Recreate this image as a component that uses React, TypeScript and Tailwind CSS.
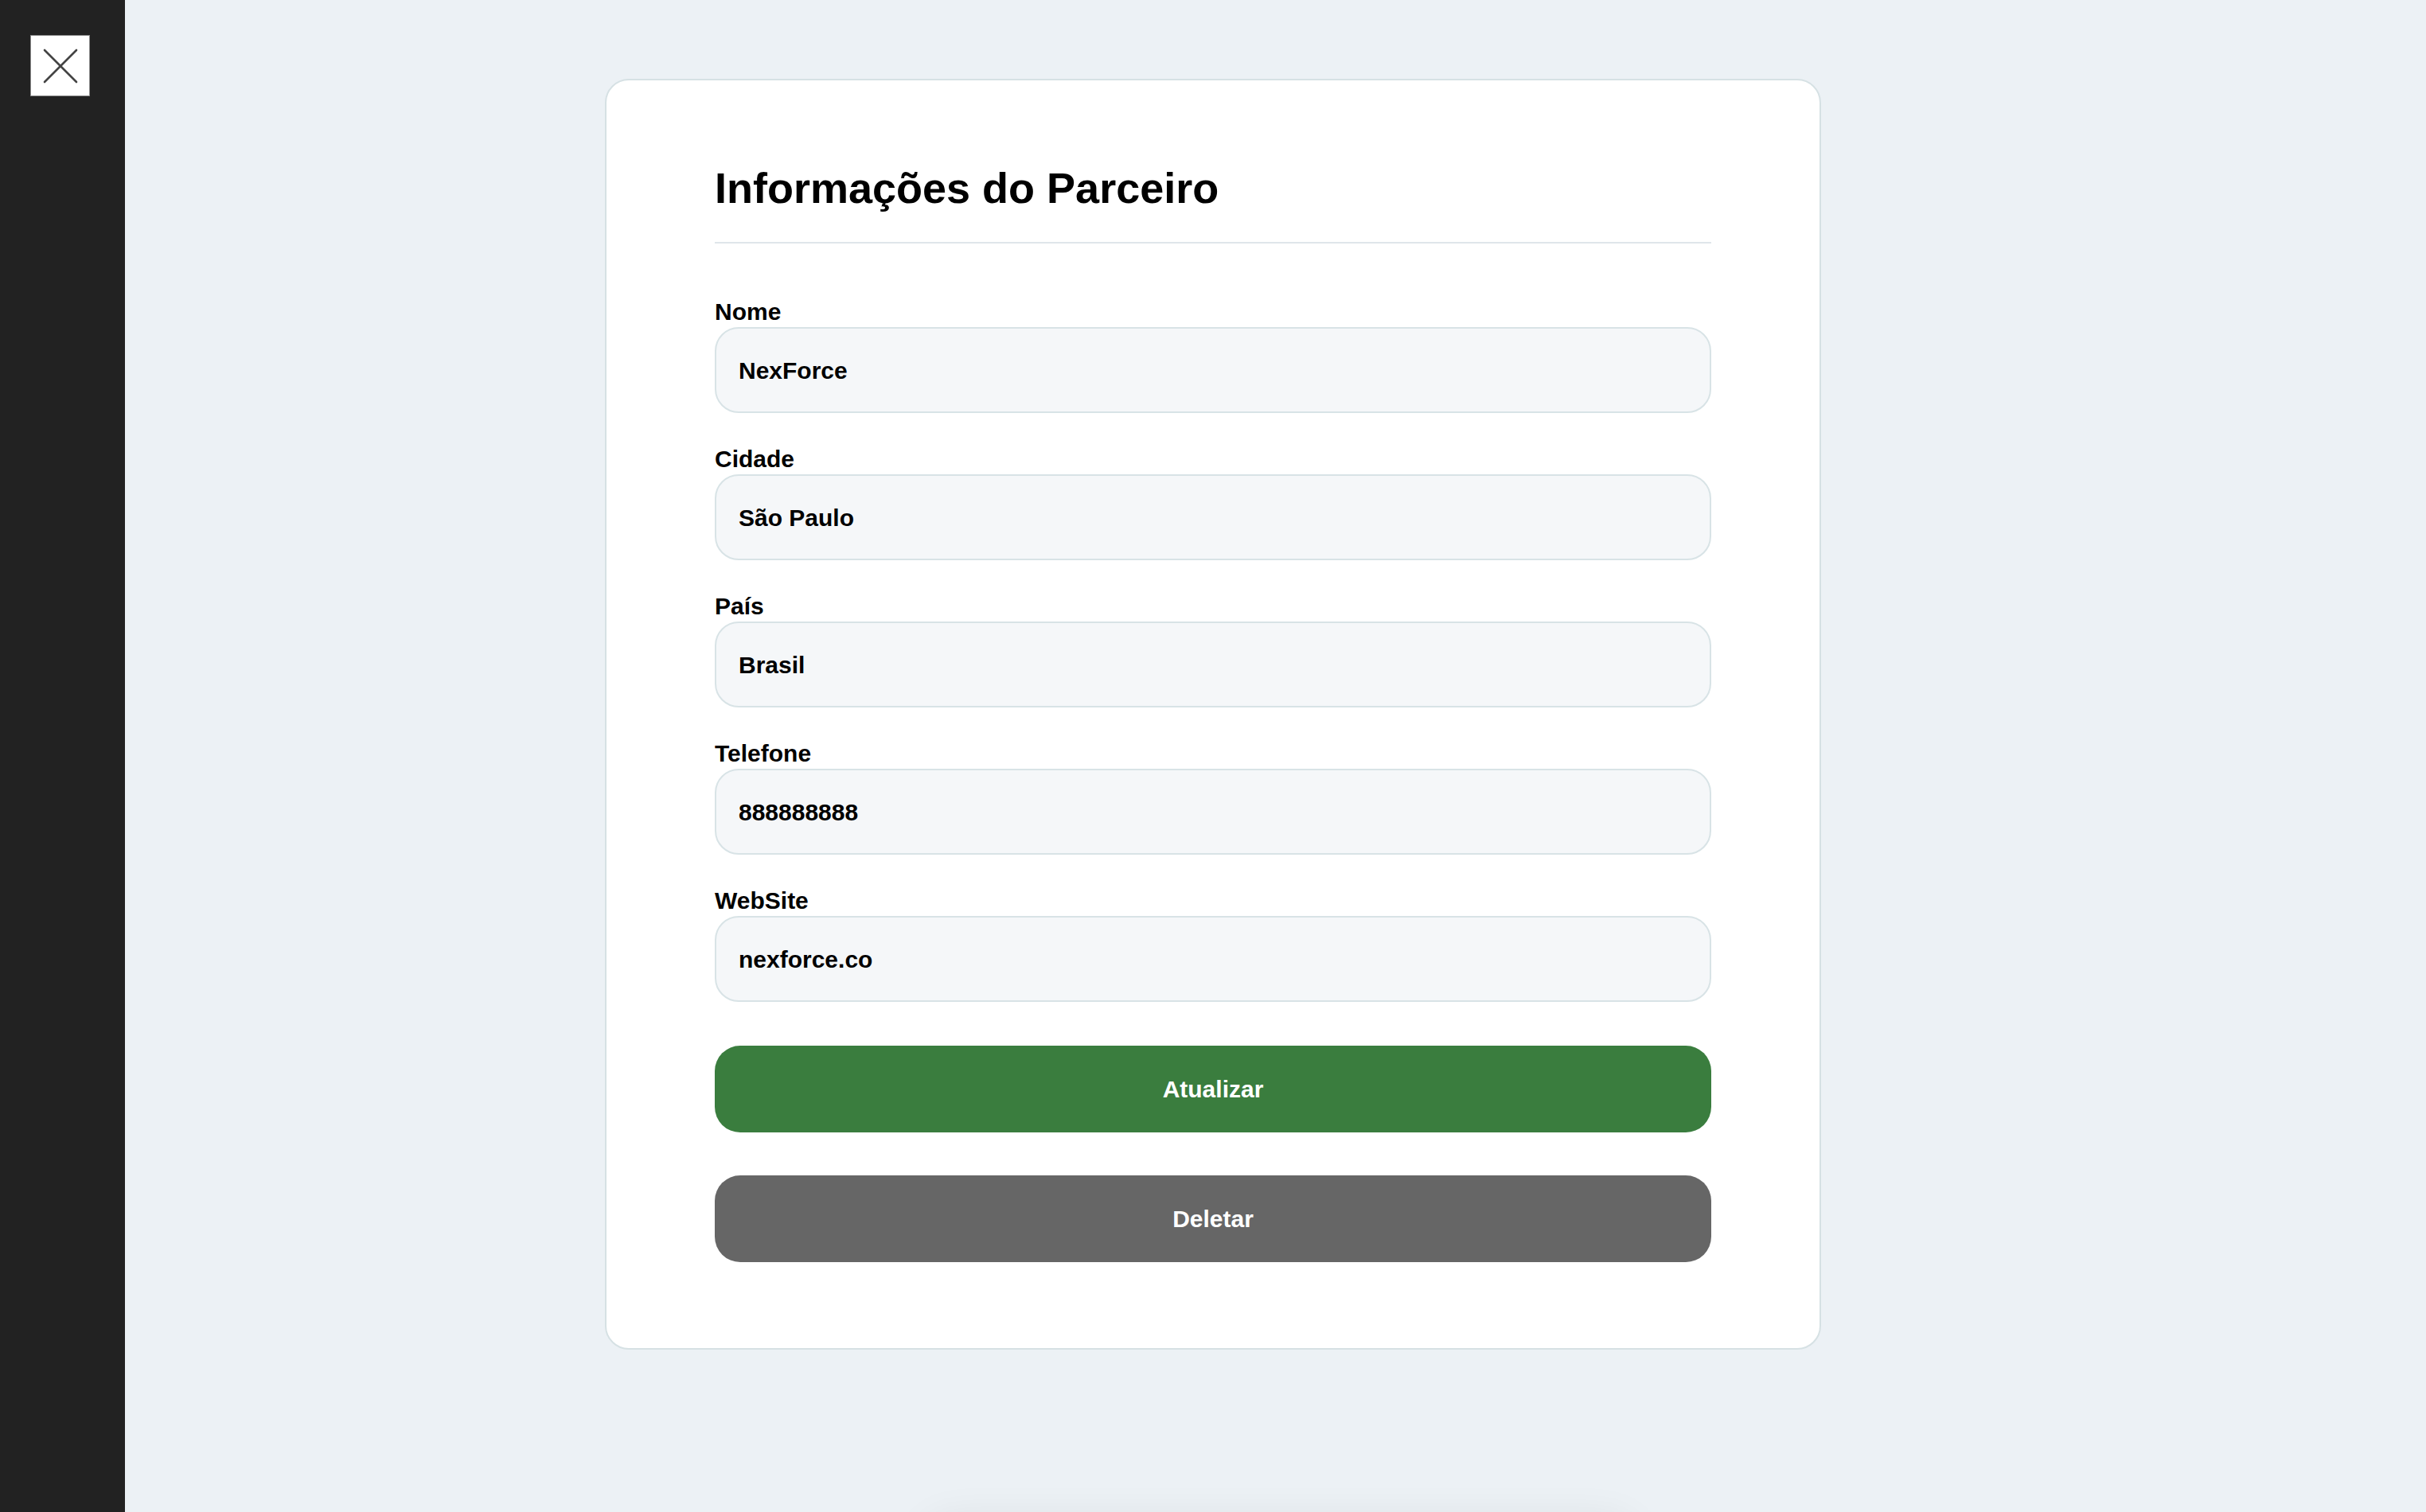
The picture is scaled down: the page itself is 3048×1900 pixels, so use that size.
import React from "react";

const fields = [
  { label: "Nome", value: "NexForce" },
  { label: "Cidade", value: "São Paulo" },
  { label: "País", value: "Brasil" },
  { label: "Telefone", value: "888888888" },
  { label: "WebSite", value: "nexforce.co" },
];

export default function App() {
  return (
    <div
      className="flex h-[1900px] w-[3048px] overflow-hidden bg-[#ecf1f5] text-black"
      style={{ fontFamily: '"Liberation Sans", Arial, Helvetica, sans-serif' }}
    >
      <aside className="flex h-full w-[157px] shrink-0 flex-col bg-[#222222] pl-[38px] pt-[44px]">
        <button className="flex h-[77px] w-[75px] items-center justify-center border border-[#8a8a8a] bg-white">
          <svg width="46" height="46" viewBox="0 0 46 46">
            <line x1="3" y1="3" x2="43" y2="43" stroke="#444" strokeWidth="2.6" strokeLinecap="round" />
            <line x1="43" y1="3" x2="3" y2="43" stroke="#444" strokeWidth="2.6" strokeLinecap="round" />
          </svg>
        </button>
      </aside>

      <main className="flex flex-1 flex-col items-center pr-[157px]">
        <div className="mt-[99px] w-[1528px] shrink-0 rounded-[30px] border-2 border-[#d6e1e4] bg-white px-[136px] pb-[108px] pt-[104px]">
          <div className="border-b-2 border-[#dfe6ea] pb-[37px]">
            <h1 className="text-[54px] font-bold leading-[62px]">Informações do Parceiro</h1>
          </div>

          <div className="mt-[69px] flex flex-col gap-[41px]">
            {fields.map((f) => (
              <div key={f.label} className="flex flex-col">
                <label className="mb-[2px] text-[30px] font-bold leading-[34px]">{f.label}</label>
                <div className="flex h-[108px] items-center rounded-[30px] border-2 border-[#d8e3e6] bg-[#f5f7f9] px-[28px] text-[30px] font-bold">
                  {f.value}
                </div>
              </div>
            ))}
          </div>

          <div className="mt-[55px] flex flex-col gap-[54px]">
            <button className="flex h-[109px] w-full items-center justify-center rounded-[32px] bg-[#3a7d3e] text-[30px] font-bold text-white">
              Atualizar
            </button>
            <button className="flex h-[109px] w-full items-center justify-center rounded-[32px] bg-[#666666] text-[30px] font-bold text-white">
              Deletar
            </button>
          </div>
        </div>

        <div className="ml-[168px] mt-[212px] h-[80px] w-[900px] shrink-0 rounded-[40px] bg-[#ecf1f5] shadow-[0_0_50px_rgba(0,0,0,0.07)]" />
      </main>
    </div>
  );
}
